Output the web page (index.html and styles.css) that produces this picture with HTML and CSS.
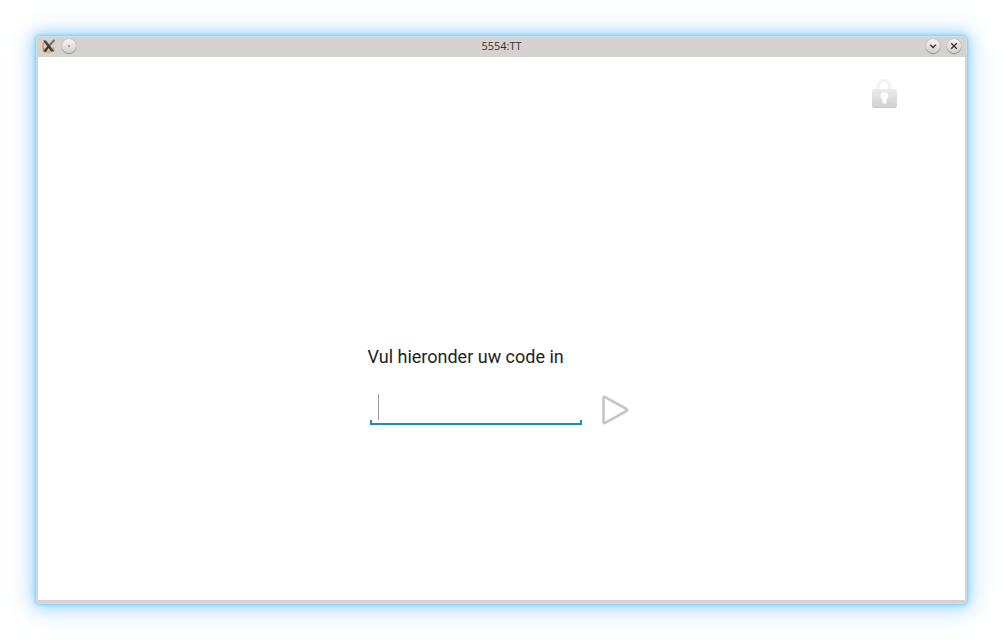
FILE: index.html
```html
<!DOCTYPE html>
<html lang="nl">
<head>
<meta charset="utf-8">
<title>5554:TT</title>
<link rel="stylesheet" href="styles.css">
</head>
<body>
<div class="window">
  <header class="titlebar">
    <div class="buttons">
      <svg class="app-icon" width="14" height="14" viewBox="0 0 14 14" aria-hidden="true">
        <path d="M2.500 3Q-.5 7 2 11" fill="none" stroke="#f08a5c" stroke-width="1.500"/>
        <path d="M2 12.500Q6 14 9 12M11 8l1 4" fill="none" stroke="#e8b030" stroke-width="1.600"/>
        <path d="M12.500 1L1.500 12.500" stroke="#77716b" stroke-width="2"/>
        <path d="M1 1.500h3l8.500 11H9z" fill="#4a4641"/>
        <path d="M7 7l-4 5.500" stroke="#37332e" stroke-width="2"/>
      </svg>
      <button class="round" type="button" aria-label="Op alle bureaubladen">
        <svg width="14" height="14" viewBox="0 0 14 14"><circle cx="7" cy="7" r=".8" fill="#555"/></svg>
      </button>
    </div>
    <h1 class="title">5554:TT</h1>
    <div class="buttons end">
      <button class="round" type="button" aria-label="Minimaliseren">
        <svg width="14" height="14" viewBox="0 0 14 14"><path d="M4.200 5.800L7 8.500 9.800 5.800" fill="none" stroke="#333" stroke-width="1.300"/></svg>
      </button>
      <button class="round" type="button" aria-label="Sluiten">
        <svg width="14" height="14" viewBox="0 0 14 14"><path d="M4.200 4.200l5.600 5.600m0-5.600l-5.600 5.600" fill="none" stroke="#333" stroke-width="1.300"/></svg>
      </button>
    </div>
  </header>
  <main class="content">
    <div class="status">
      <svg width="28" height="32" viewBox="0 0 28 32" role="img" aria-label="Vergrendeld">
        <defs>
          <linearGradient id="body" x1="0" y1="0" x2="0" y2="1"><stop offset="0" stop-color="#ececec"/><stop offset="1" stop-color="#cfcfcf"/></linearGradient>
        </defs>
        <path d="M8 13V8.500a6 6 0 0 1 12 0V13" fill="none" stroke="#f3f3f3" stroke-width="3.400"/>
        <rect x="2" y="11" width="25" height="19" rx="2.500" fill="url(#body)"/>
        <path d="M3.500 29.500h22" stroke="#c8c8c8"/>
        <path d="M14.500 14a4 4 0 0 1 2 7.400V25.500h-4v-4.100A4 4 0 0 1 14.500 14z" fill="#fdfdfd"/>
      </svg>
    </div>
    <form class="code-form">
      <label class="prompt" for="code">Vul hieronder uw code in</label>
      <div class="entry">
        <input class="code" id="code" type="text" autocomplete="off">
        <button class="go" type="button" aria-label="Verder">
          <svg width="30" height="32" viewBox="0 0 30 32"><path d="M3.500 5.200v23.600q0 2 1.700 1L26.500 18q1.500-1 0-2L5.200 4.200q-1.700-1-1.700 1z" fill="none" stroke="#c6c6c8" stroke-width="2.600" stroke-linejoin="round"/></svg>
        </button>
      </div>
    </form>
  </main>
</div>
</body>
</html>
```
FILE: styles.css
```css
* {
  box-sizing: border-box;
}

body {
  margin: 0;
  background: #fff;
  font-family: Roboto, "Liberation Sans", sans-serif;
}

button {
  display: flex;
  padding: 0;
  border: 0;
  background: none;
}

.window {
  display: flex;
  flex-direction: column;
  min-height: calc(100vh - 72px);
  margin: 36px;
  padding: 0 2px 4px;
  border-radius: 4px;
  background: #d6d2cf;
  box-shadow: inset 0 0 0 1px #d3dcdf, 0 0 3px 1px #78d0fb, 0 0 14px 2px #9bd4ff, 0 2px 30px 6px #d6ebff;
}

.titlebar {
  display: grid;
  grid-template-columns: 1fr auto 1fr;
  align-items: center;
  height: 21px;
  padding: 0 4px 1px;
}

.buttons {
  display: flex;
  align-items: center;
  gap: 6px;
}

.end {
  justify-content: flex-end;
  gap: 7px;
}

.round {
  border-radius: 50%;
  background: linear-gradient(#f6f5f4, #d2cfcd);
  box-shadow: 0 1px 1px #8d8986, 0 0 1px #8d8986;
}

.title {
  margin: 0;
  color: #333;
  font: 11px/16px "Open Sans", "Noto Sans", sans-serif;
}

.content {
  display: flex;
  flex: 1;
  flex-direction: column;
  background: #fff;
}

.status {
  display: flex;
  justify-content: flex-end;
  padding: 21px 67px 0;
}

.code-form {
  display: flex;
  flex: 1;
  flex-direction: column;
  align-self: center;
  justify-content: center;
  gap: 24px;
  padding: 60px 6px 0 0;
}

.prompt {
  color: #222;
  font-size: 18px;
  line-height: 24px;
}

.entry {
  display: flex;
  align-items: center;
  gap: 18px;
  padding-left: 2px;
}

.code {
  width: 212px;
  height: 32px;
  padding: 0 8px;
  border: 0;
  outline: 0;
  background:
    linear-gradient(#999, #999) 8px 1px / 1px 26px no-repeat,
    linear-gradient(#1c8ac6, #1c8ac6) 0 100% / 100% 2px no-repeat,
    linear-gradient(#1c8ac6, #1c8ac6) 0 100% / 2px 5px no-repeat,
    linear-gradient(#1c8ac6, #1c8ac6) 100% 100% / 2px 5px no-repeat;
  font: 18px Roboto, sans-serif;
}
```
